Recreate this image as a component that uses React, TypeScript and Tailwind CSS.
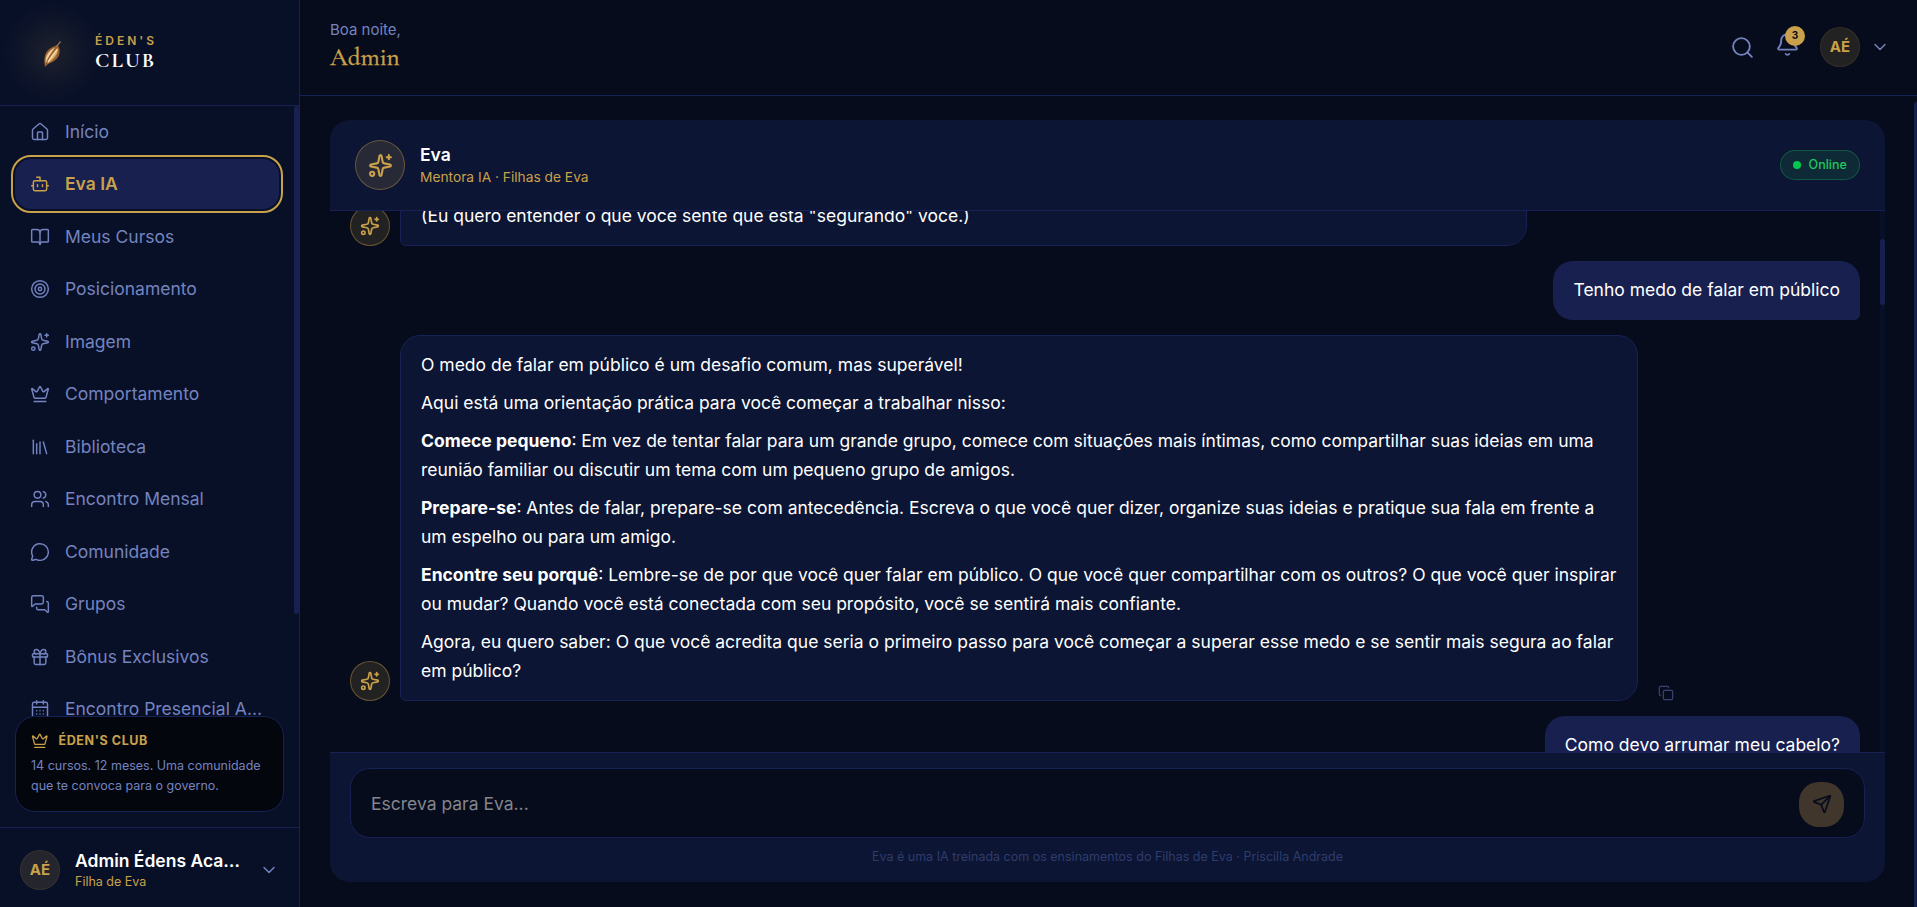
import type { ReactNode } from "react";
import {
  Bell,
  BookOpen,
  Bot,
  CalendarDays,
  ChevronDown,
  Copy,
  Crown,
  Gift,
  House,
  MessageCircle,
  MessagesSquare,
  Search,
  Send,
  Sparkles,
  Users,
} from "lucide-react";

type IconProps = { className?: string; strokeWidth?: number };

const Library = ({ className, strokeWidth = 1.75 }: IconProps) => (
  <svg viewBox="0 0 24 24" fill="none" stroke="currentColor" strokeWidth={strokeWidth} strokeLinecap="round" strokeLinejoin="round" className={className}>
    <path d="m16 6 4 14" />
    <path d="M12 6v14" />
    <path d="M8 8v12" />
    <path d="M4 4v16" />
  </svg>
);

const Rings = ({ className, strokeWidth = 1.75 }: IconProps) => (
  <svg viewBox="0 0 24 24" fill="none" stroke="currentColor" strokeWidth={strokeWidth} className={className}>
    <circle cx="12" cy="12" r="10" />
    <circle cx="12" cy="12" r="6" />
    <circle cx="12" cy="12" r="2" />
  </svg>
);

const nav = [
  { label: "Início", icon: House },
  { label: "Eva IA", icon: Bot, active: true },
  { label: "Meus Cursos", icon: BookOpen },
  { label: "Posicionamento", icon: Rings },
  { label: "Imagem", icon: Sparkles },
  { label: "Comportamento", icon: Crown },
  { label: "Biblioteca", icon: Library },
  { label: "Encontro Mensal", icon: Users },
  { label: "Comunidade", icon: MessageCircle },
  { label: "Grupos", icon: MessagesSquare },
  { label: "Bônus Exclusivos", icon: Gift },
  { label: "Encontro Presencial Anual", icon: CalendarDays },
];

function Leaf() {
  return (
    <svg viewBox="0 0 34 38" className="h-[38px] w-[34px]">
      <path d="M9 33C7.500 25 8.500 18 14 14.500C17 12.500 20 12 21.500 10.500C24.500 15 24.500 20.500 21 24.500C17.500 28.500 12 29 9 33Z" fill="#96602e" />
      <path d="M9.700 29.500C9 22.500 11.500 17.500 19 13.500C15 19 12 23 9.700 29.500Z" fill="#f0cc97" />
      <path d="M11 29.500C13.500 23.500 17 18.500 21.500 14C23 19.500 18 25.500 11 29.500Z" fill="#dcaa6b" />
      <path d="M12 28C14.500 24 18.500 19.500 21.500 15" fill="none" stroke="#f9e2ba" strokeWidth="1.200" />
      <path d="M20.500 12.500C22 11 23 9.500 24.500 7.500" fill="none" stroke="#8d7458" strokeWidth="1.300" />
    </svg>
  );
}

function Avatar() {
  return (
    <div className="flex size-10 shrink-0 items-center justify-center rounded-full border border-[#c9a14a]/10 bg-[#c9a14a]/15 text-[15px] font-bold text-[#c9a14a]">
      AÉ
    </div>
  );
}

function Sidebar() {
  return (
    <aside className="flex h-full w-[300px] shrink-0 flex-col border-r border-[#182154] bg-[#081028]">
      <div className="flex h-[106px] shrink-0 items-center border-b border-[#182154]">
        <div className="flex h-[105px] w-[105px] items-center justify-center bg-[radial-gradient(circle_closest-side,#c9a14a1c_0%,#c9a14a12_35%,#c9a14a06_70%,#c9a14a00_95%)]">
          <Leaf />
        </div>
        <div className="-ml-[10px] flex flex-col">
          <span className="text-[12px] leading-[15px] font-semibold tracking-[3px] text-[#c9a14a]">ÉDEN'S</span>
          <span className="pt-px font-['Cormorant_Garamond','Liberation_Serif',serif] text-[21px] leading-[24px] font-bold tracking-[2.1px] text-white">
            CLUB
          </span>
        </div>
      </div>

      <div className="flex min-h-0 flex-1">
        <nav className="flex w-[294px] shrink-0 flex-col gap-[2.5px] overflow-hidden px-[15px] pt-[0.5px]">
          {nav.map(({ label, icon: Icon, active }) => (
            <a
              key={label}
              className={
                active
                  ? "flex h-[50px] shrink-0 items-center gap-[15px] rounded-[16px] bg-[#182050] px-[15px] text-[17.5px] font-semibold text-[#c9a14a] outline-2 outline-offset-2 outline-[#c9a14a]"
                  : "flex h-[50px] shrink-0 items-center gap-[15px] px-[15px] text-[17.5px] text-[#7483bf]"
              }
            >
              <Icon className="size-5 shrink-0" strokeWidth={1.75} />
              <span className="truncate pt-px">{label}</span>
            </a>
          ))}
        </nav>
        <div className="h-[508px] w-[5px] rounded-full bg-[#182050]" />
      </div>

      <div className="mx-[15px] mb-[15px] h-[96px] w-[269px] shrink-0 rounded-[20px] border border-[#182154] bg-[#04060e] px-[15px] pt-[14px]">
        <div className="flex items-center gap-[10px] text-[#c9a14a]">
          <Crown className="size-[17.5px]" strokeWidth={1.75} />
          <span className="text-[12.5px] leading-[20px] font-bold tracking-[0.6px]">ÉDEN'S CLUB</span>
        </div>
        <p className="mt-[5px] text-[12.5px] leading-[20px] text-[#7483bf]">
          14 cursos. 12 meses. Uma comunidade
          <br />
          que te convoca para o governo.
        </p>
      </div>

      <div className="flex h-[80px] shrink-0 items-center gap-[15px] border-t border-[#182154] pt-[5px] pr-5 pl-5">
        <Avatar />
        <div className="min-w-0 flex-1">
          <div className="max-w-[166px] truncate pt-px text-[17.5px] leading-[22px] font-semibold text-white">Admin Édens Academy</div>
          <div className="text-[12.5px] leading-[20px] text-[#c9a14a]">Filha de Eva</div>
        </div>
        <ChevronDown className="size-5 shrink-0 text-[#7483bf]" strokeWidth={1.75} />
      </div>
    </aside>
  );
}

function TopBar() {
  return (
    <header className="flex h-[96px] shrink-0 items-center justify-between border-b border-[#182154] pr-[27px] pl-[30px]">
      <div className="pb-[3px]">
        <p className="text-[15px] leading-[22px] text-[#7483bf]">Boa noite,</p>
        <p className="font-['Cormorant_Garamond','Liberation_Serif',serif] text-[25px] leading-[32px] font-medium text-[#c9a14a] [-webkit-text-stroke:0.3px_#c9a14a]">
          Admin
        </p>
      </div>
      <div className="flex items-center pb-px text-[#7483bf]">
        <Search className="size-[25px]" strokeWidth={1.75} />
        <div className="relative ml-5">
          <Bell className="size-[25px] -translate-y-[3px]" strokeWidth={1.75} />
          <span className="absolute -top-[9px] left-[10px] flex size-5 items-center justify-center rounded-full bg-[#c9a14a] text-[10px] font-bold text-[#070b1c]">
            3
          </span>
        </div>
        <div className="mr-[10px] ml-5">
          <Avatar />
        </div>
        <ChevronDown className="size-5" strokeWidth={1.75} />
      </div>
    </header>
  );
}

function EvaAvatar() {
  return (
    <div className="flex size-10 shrink-0 items-center justify-center rounded-full border border-[#c9a14a]/40 bg-[#c9a14a]/15 text-[#c9a14a]">
      <Sparkles className="size-5" strokeWidth={2} />
    </div>
  );
}

function EvaMessage({ children, className }: { children: ReactNode; className: string }) {
  return (
    <div className="flex shrink-0 items-end gap-[10px]">
      <EvaAvatar />
      <div className={`flex flex-col gap-[8.75px] rounded-[20px] rounded-bl-[6px] border border-[#182154] bg-[#0c1533] px-5 pt-[14px] pb-[15px] text-[17.5px] leading-[29.1px] text-white ${className}`}>
        {children}
      </div>
    </div>
  );
}

function UserMessage({ children }: { children: ReactNode }) {
  return (
    <div className="shrink-0 self-end rounded-[20px] rounded-br-[6px] bg-[#182050] px-5 pt-[14px] pb-[16px] text-[17.5px] leading-[29px] text-white">
      {children}
    </div>
  );
}

function Chat() {
  return (
    <section className="flex h-[762px] w-[1555px] flex-col overflow-hidden rounded-[20px]">
      <div className="flex h-[91px] shrink-0 items-center gap-[15px] border-b border-[#182154] bg-[#0c1533] px-[25px]">
        <div className="flex size-[50px] items-center justify-center rounded-full border border-[#c9a14a]/40 bg-[#c9a14a]/15 text-[#c9a14a]">
          <Sparkles className="size-[25px]" strokeWidth={2} />
        </div>
        <div className="flex-1 pt-[2px]">
          <p className="text-[17.5px] leading-[22px] font-semibold text-white">Eva</p>
          <p className="text-[13.75px] leading-[22px] text-[#c9a14a]">Mentora IA · Filhas de Eva</p>
        </div>
        <div className="flex h-[30px] w-20 items-center justify-center gap-[7.5px] rounded-full border border-[#22c55e]/30 bg-[#22c55e]/12 text-[12.5px] font-medium text-[#1fc65c]">
          <span className="size-2 rounded-full bg-[#00c950]" />
          Online
        </div>
      </div>

      <div className="flex min-h-0 flex-1">
        <div className="flex min-w-0 flex-1 flex-col overflow-hidden">
          {/* scrolled so that only the tail of the first answer shows */}
          <div className="-mt-[25px] flex flex-col gap-[15px] px-5">
            <EvaMessage className="w-[1127px]">
              <p>(Eu quero entender o que você sente que está "segurando" você.)</p>
            </EvaMessage>
            <UserMessage>Tenho medo de falar em público</UserMessage>
            <div className="flex items-end gap-5">
              <EvaMessage className="w-[1238px]">
                <p>O medo de falar em público é um desafio comum, mas superável!</p>
                <p>Aqui está uma orientação prática para você começar a trabalhar nisso:</p>
                <p>
                  <strong>Comece pequeno</strong>: Em vez de tentar falar para um grande grupo, comece com situações mais íntimas, como compartilhar suas ideias em uma reunião familiar ou discutir um tema com um pequeno grupo de amigos.
                </p>
                <p>
                  <strong>Prepare-se</strong>: Antes de falar, prepare-se com antecedência. Escreva o que você quer dizer, organize suas ideias e pratique sua fala em frente a um espelho ou para um amigo.
                </p>
                <p>
                  <strong>Encontre seu porquê</strong>: Lembre-se de por que você quer falar em público. O que você quer compartilhar com os outros? O que você quer inspirar ou mudar? Quando você está conectada com seu propósito, você se sentirá mais confiante.
                </p>
                <p>
                  Agora, eu quero saber: O que você acredita que seria o primeiro passo para você começar a superar esse medo e se sentir mais segura ao falar em público?
                </p>
              </EvaMessage>
              <Copy className="size-[16px] text-[#3a4470]" strokeWidth={1.75} />
            </div>
            <UserMessage>Como devo arrumar meu cabelo?</UserMessage>
          </div>
        </div>
        <div className="w-[5px] bg-[#081028] pt-[28px]">
          <div className="h-[66px] rounded-full bg-[#182050]" />
        </div>
      </div>

      <div className="h-[130px] shrink-0 border-t border-[#182154] bg-[#0c1533] px-5 pt-[15px]">
        <div className="flex h-[70px] items-center justify-between rounded-[20px] border border-[#182154] bg-[#070c1c] px-5 pt-[2px]">
          <span className="text-[17.5px] text-[#83858d]">Escreva para Eva...</span>
          <button className="flex size-[45px] items-center justify-center rounded-[20px] bg-[#40362c] text-[#070c1c]">
            <Send className="size-5" strokeWidth={2} />
          </button>
        </div>
        <p className="mt-[10px] text-center text-[12.5px] leading-[18px] text-[#303c6c]">
          Eva é uma IA treinada com os ensinamentos do Filhas de Eva · Priscilla Andrade
        </p>
      </div>
    </section>
  );
}

export default function App() {
  return (
    <div className="flex h-[907px] w-[1917px] overflow-hidden bg-[#070c1c] font-['Inter',sans-serif]">
      <Sidebar />
      <div className="flex min-w-0 flex-1 flex-col">
        <TopBar />
        <div className="flex min-h-0 flex-1 justify-between">
          <main className="pt-6 pl-[30px]">
            <Chat />
          </main>
          <div className="mt-[6px] w-[3px] rounded-tl-full bg-[#182050]" />
        </div>
      </div>
    </div>
  );
}
